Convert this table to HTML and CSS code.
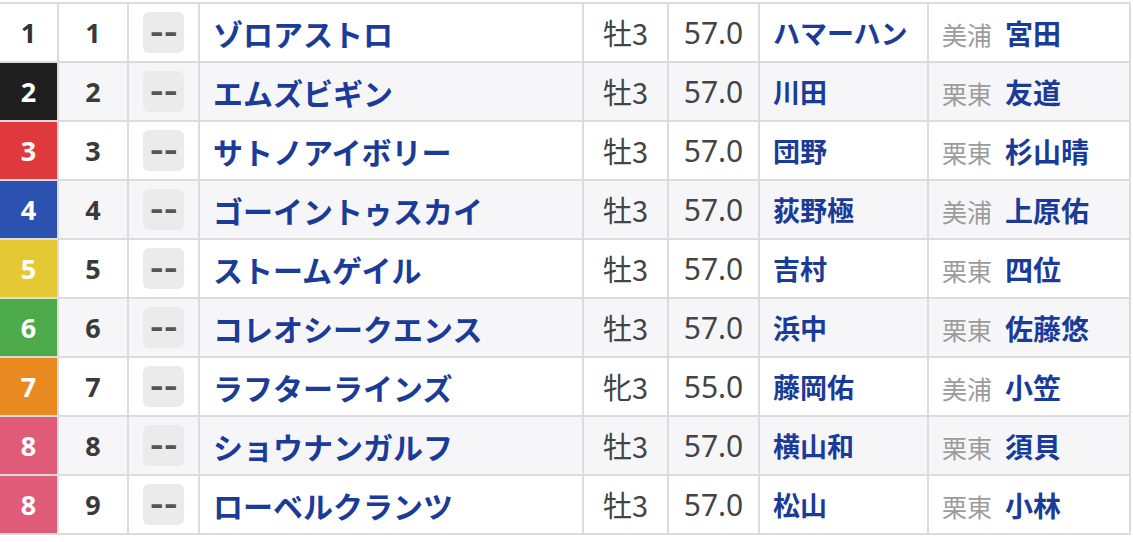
FILE: index.html
```html
<!DOCTYPE html>
<html lang="ja">
<head>
<meta charset="utf-8">
<title>出馬表</title>
<link rel="stylesheet" href="styles.css">
</head>
<body>
<table class="race">
  <colgroup>
    <col class="c-waku"><col class="c-num"><col class="c-mark"><col class="c-horse">
    <col class="c-sex"><col class="c-wt"><col class="c-jockey"><col class="c-trainer">
  </colgroup>
  <tbody>
    <tr>
      <td class="waku w1">1</td><td class="num">1</td><td class="mark"><span class="btn"><span class="dash">--</span></span></td>
      <td class="horse">ゾロアストロ</td><td class="sex">牡3</td><td class="wt">57.0</td>
      <td class="jockey">ハマーハン</td><td class="trainer"><span class="area">美浦</span>宮田</td>
    </tr>
    <tr>
      <td class="waku w2">2</td><td class="num">2</td><td class="mark"><span class="btn"><span class="dash">--</span></span></td>
      <td class="horse">エムズビギン</td><td class="sex">牡3</td><td class="wt">57.0</td>
      <td class="jockey">川田</td><td class="trainer"><span class="area">栗東</span>友道</td>
    </tr>
    <tr>
      <td class="waku w3">3</td><td class="num">3</td><td class="mark"><span class="btn"><span class="dash">--</span></span></td>
      <td class="horse">サトノアイボリー</td><td class="sex">牡3</td><td class="wt">57.0</td>
      <td class="jockey">団野</td><td class="trainer"><span class="area">栗東</span>杉山晴</td>
    </tr>
    <tr>
      <td class="waku w4">4</td><td class="num">4</td><td class="mark"><span class="btn"><span class="dash">--</span></span></td>
      <td class="horse">ゴーイントゥスカイ</td><td class="sex">牡3</td><td class="wt">57.0</td>
      <td class="jockey">荻野極</td><td class="trainer"><span class="area">美浦</span>上原佑</td>
    </tr>
    <tr>
      <td class="waku w5">5</td><td class="num">5</td><td class="mark"><span class="btn"><span class="dash">--</span></span></td>
      <td class="horse">ストームゲイル</td><td class="sex">牡3</td><td class="wt">57.0</td>
      <td class="jockey">吉村</td><td class="trainer"><span class="area">栗東</span>四位</td>
    </tr>
    <tr>
      <td class="waku w6">6</td><td class="num">6</td><td class="mark"><span class="btn"><span class="dash">--</span></span></td>
      <td class="horse">コレオシークエンス</td><td class="sex">牡3</td><td class="wt">57.0</td>
      <td class="jockey">浜中</td><td class="trainer"><span class="area">栗東</span>佐藤悠</td>
    </tr>
    <tr>
      <td class="waku w7">7</td><td class="num">7</td><td class="mark"><span class="btn"><span class="dash">--</span></span></td>
      <td class="horse">ラフターラインズ</td><td class="sex">牝3</td><td class="wt">55.0</td>
      <td class="jockey">藤岡佑</td><td class="trainer"><span class="area">美浦</span>小笠</td>
    </tr>
    <tr>
      <td class="waku w8">8</td><td class="num">8</td><td class="mark"><span class="btn"><span class="dash">--</span></span></td>
      <td class="horse">ショウナンガルフ</td><td class="sex">牡3</td><td class="wt">57.0</td>
      <td class="jockey">横山和</td><td class="trainer"><span class="area">栗東</span>須貝</td>
    </tr>
    <tr>
      <td class="waku w8">8</td><td class="num">9</td><td class="mark"><span class="btn"><span class="dash">--</span></span></td>
      <td class="horse">ローベルクランツ</td><td class="sex">牡3</td><td class="wt">57.0</td>
      <td class="jockey">松山</td><td class="trainer"><span class="area">栗東</span>小林</td>
    </tr>
  </tbody>
</table>
</body>
</html>
```

FILE: styles.css
```css
html, body {
  margin: 0;
  padding: 0;
  background: #ffffff;
}
body {
  font-family: "Noto Sans CJK JP", "Noto Sans", sans-serif;
  overflow: hidden;
}
.race {
  table-layout: fixed;
  border-collapse: separate;
  border-spacing: 2px;
  background: #dcdcdc;
  margin: 2px 0 0 -2px;
  width: 1133px;
}
.c-waku { width: 57px; }
.c-num { width: 68px; }
.c-mark { width: 69px; }
.c-horse { width: 382px; }
.c-sex { width: 83px; }
.c-wt { width: 89px; }
.c-jockey { width: 167px; }
.c-trainer { width: 200px; }

.race td {
  height: 57px;
  padding: 0;
  background: #ffffff;
  vertical-align: middle;
  white-space: nowrap;
  overflow: hidden;
  line-height: 1;
}
.race tr:nth-child(even) td {
  background: #f6f6f8;
}
.race tr td.waku {
  text-align: center;
  font-family: "Noto Sans", "Noto Sans CJK JP", sans-serif;
  font-weight: 700;
  font-size: 27px;
  color: #ffffff;
}
.race tr td.w1 { background: #ffffff; color: #333333; }
.race tr td.w2 { background: #1f1f1f; }
.race tr td.w3 { background: #e0393d; }
.race tr td.w4 { background: #2b52b0; }
.race tr td.w5 { background: #e5c934; }
.race tr td.w6 { background: #4caa48; }
.race tr td.w7 { background: #e88a1f; }
.race tr td.w8 { background: #df5b78; }

.num {
  text-align: center;
  font-family: "Noto Sans", sans-serif;
  font-weight: 700;
  font-size: 27px;
  color: #3a3a3a;
}
.mark {
  text-align: center;
}
.btn {
  display: inline-flex;
  align-items: center;
  justify-content: center;
  width: 41px;
  height: 41px;
  border-radius: 6px;
  background: #ebebeb;
  vertical-align: middle;
}
.dash {
  display: inline-block;
  color: #555555;
  font-family: "DejaVu Sans", sans-serif;
  font-weight: 700;
  font-size: 26px;
  letter-spacing: 0;
  transform: scaleX(1.3);
}
.horse {
  padding-left: 13px !important;
  font-weight: 700;
  font-size: 30px;
  color: #1a3b98;
}
.sex, .wt {
  text-align: center;
  font-size: 29px;
  font-weight: 400;
  color: #444444;
}
.wt {
  font-family: "Noto Sans", "Noto Sans CJK JP", sans-serif;
  font-size: 30px;
}
.jockey {
  padding-left: 13px !important;
  font-weight: 700;
  font-size: 27px;
  color: #1a3b98;
}
.trainer {
  padding-left: 13px !important;
  font-weight: 700;
  font-size: 28px;
  color: #1a3b98;
}
.area {
  font-weight: 400;
  font-size: 25px;
  color: #9c9c9c;
  margin-right: 13px;
}
```
